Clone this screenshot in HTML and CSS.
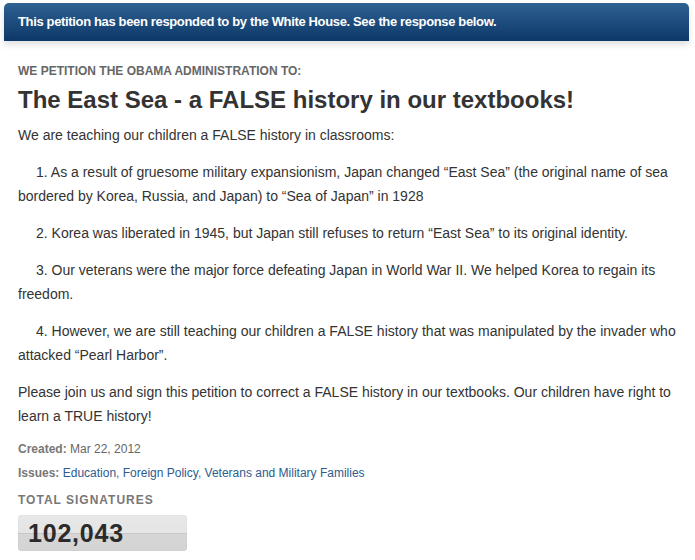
FILE: index.html
```html
<!DOCTYPE html>
<html lang="en">
<head>
  <meta charset="UTF-8" />
  <meta name="viewport" content="width=device-width, initial-scale=1" />
  <title>The East Sea - a FALSE history in our textbooks!</title>
  <link rel="stylesheet" href="styles.css">
</head>
<body>

  <div class="notice">This petition has been responded to by the White House. See the response below.</div>

  <div class="petition">
    <h4 class="petition-to">We petition the Obama Administration to:</h4>
    <h1 class="title">The East Sea - a FALSE history in our textbooks!</h1>

    <p>We are teaching our children a FALSE history in classrooms:</p>
    <p class="item">1. As a result of gruesome military expansionism, Japan changed “East Sea” (the original name of sea bordered by Korea, Russia, and Japan) to “Sea of Japan” in 1928</p>
    <p class="item">2. Korea was liberated in 1945, but Japan still refuses to return “East Sea” to its original identity.</p>
    <p class="item">3. Our veterans were the major force defeating Japan in World War II. We helped Korea to regain its freedom.</p>
    <p class="item">4. However, we are still teaching our children a FALSE history that was manipulated by the invader who attacked “Pearl Harbor”.</p>
    <p>Please join us and sign this petition to correct a FALSE history in our textbooks. Our children have right to learn a TRUE history!</p>

    <div class="meta"><strong>Created:</strong> Mar 22, 2012</div>
    <div class="meta"><strong>Issues:</strong> <a href="#">Education</a>, <a href="#">Foreign Policy</a>, <a href="#">Veterans and Military Families</a></div>

    <h4 class="sig-label">Total Signatures</h4>
    <div class="counter"><span>102,043</span></div>
  </div>

</body>
</html>
```

FILE: styles.css
```css
body {
  font-family: "Liberation Sans", Arial, sans-serif;
  color: #333;
  margin: 0;
  padding: 3px 6px 0 4px;
  background: #fff;
}
.notice {
  background: linear-gradient(#2f6193, #0c3867);
  color: #fff;
  font-weight: bold;
  font-size: 13px;
  line-height: 38px;
  padding: 0 14px;
  border-radius: 5px 5px 0 0;
  box-shadow: 0 4px 6px rgba(0, 0, 0, 0.12);
  letter-spacing: -0.35px;
}
.petition {
  padding: 0 0 0 14px;
}
.petition-to {
  margin: 22px 0 0;
  font-size: 12px;
  text-transform: uppercase;
  color: #666;
  line-height: 16px;
}
.title {
  font-size: 24px;
  margin: 5px 0 7px;
  line-height: 32px;
  color: #333;
}
p {
  font-size: 14px;
  line-height: 24px;
  margin: 0 0 13px;
}
.item {
  text-indent: 18px;
}
.meta {
  font-size: 12px;
  color: #666;
  line-height: 16px;
  margin-bottom: 8px;
}
.meta strong {
  color: #777;
}
.meta a {
  color: #2b5c8f;
  text-decoration: none;
}
.sig-label {
  margin: 12px 0 8px;
  font-size: 12px;
  letter-spacing: 1px;
  text-transform: uppercase;
  color: #777;
}
.counter {
  width: 169px;
  height: 36px;
  border-radius: 4px;
  background: linear-gradient(#e8e8e8 0, #e5e5e5 50%, #bdbdbd 50%, #bdbdbd 51%, #d6d6d6 52%, #d4d4d4 100%);
  box-shadow: inset 0 0 1px rgba(0, 0, 0, 0.2);
}
.counter span {
  display: block;
  padding-left: 10px;
  font-size: 25px;
  font-weight: bold;
  letter-spacing: 0.8px;
  line-height: 36px;
  color: #2b2b2b;
}
```
